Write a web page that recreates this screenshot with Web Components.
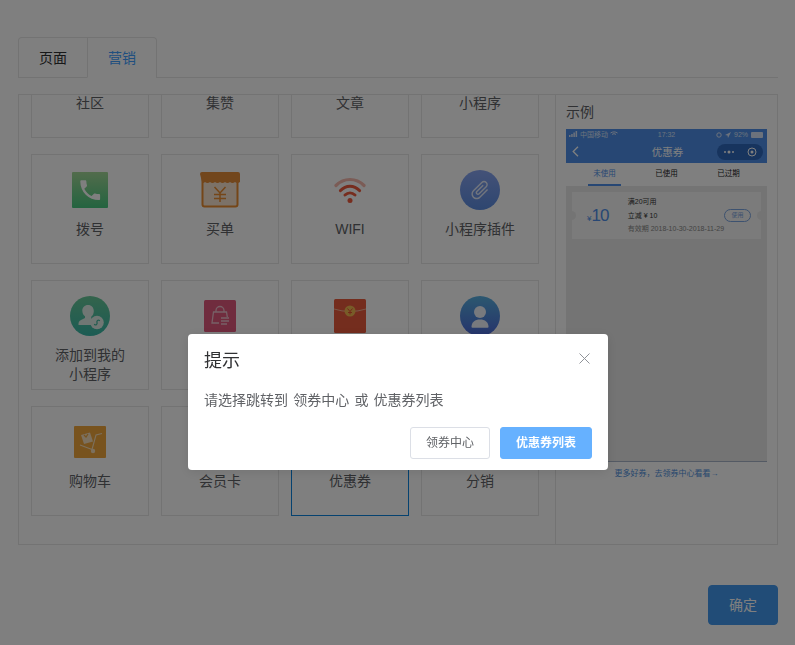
<!DOCTYPE html>
<html lang="zh">
<head>
<meta charset="utf-8">
<title>营销</title>
<style>
  html, body { margin: 0; height: 100%; background: #fff; overflow: hidden; }
  body { font-family: "Liberation Sans", "Noto Sans CJK SC", sans-serif; color: #303133; }
</style>
</head>
<body>
<picker-page>
  <tab-bar>
    <tab-item>页面</tab-item>
    <tab-item active>营销</tab-item>
  </tab-bar>
  <picker-panel>
    <feature-grid>
      <feature-card label="社区"></feature-card>
      <feature-card label="集赞"></feature-card>
      <feature-card label="文章"></feature-card>
      <feature-card label="小程序"></feature-card>

      <feature-card label="拨号">
        <svg slot="icon" width="36" height="36" viewBox="0 0 36 36">
          <defs><linearGradient id="g-dial" x1="0" y1="0" x2="0" y2="1"><stop offset="0" stop-color="#a4d898"/><stop offset="1" stop-color="#48c880"/></linearGradient></defs>
          <rect width="36" height="36" rx="1" fill="url(#g-dial)"/>
          <path transform="translate(5 5) scale(1.1)" fill="#fff" d="M6.62 10.79c1.44 2.83 3.76 5.14 6.59 6.59l2.2-2.2c.27-.27.67-.36 1.02-.24 1.12.37 2.33.57 3.57.57.55 0 1 .45 1 1V20c0 .55-.45 1-1 1-9.39 0-17-7.61-17-17 0-.55.45-1 1-1h3.5c.55 0 1 .45 1 1 0 1.25.2 2.45.57 3.57.11.35.03.74-.25 1.02l-2.2 2.2z"/>
        </svg>
      </feature-card>
      <feature-card label="买单">
        <svg slot="icon" width="40" height="36" viewBox="0 0 40 36">
          <rect x="2.500" y="4" width="35" height="30.500" rx="2" fill="#f8e4d0" stroke="#ea8c30" stroke-width="2"/>
          <path d="M0 2q0-2 2-2h36q2 0 2 2v8q-2.500 2-5 0q-2.500 2-5 0q-2.500 2-5 0q-2.500 2-5 0q-2.500 2-5 0q-2.500 2-5 0q-2.500 2-5 0q-2.500 2-3 0z" fill="#e48c38"/>
          <path d="M14.500 15l5.500 6 5.500-6M20 21v9M14 22.500h12M14 26.500h12" fill="none" stroke="#ea8c30" stroke-width="1.500"/>
        </svg>
      </feature-card>
      <feature-card label="WIFI">
        <svg slot="icon" width="32" height="28" viewBox="0 0 32 28">
          <path d="M2 9.500C10 1.500 22 1.500 30 9.500" fill="none" stroke="#f6b8ac" stroke-width="3.200" stroke-linecap="round"/>
          <path d="M6.500 14.500C12 8.800 20 8.800 25.500 14.500" fill="none" stroke="#ee5a3c" stroke-width="3.200" stroke-linecap="round"/>
          <path d="M11 19c3-2.800 7-2.800 10 0" fill="none" stroke="#ee5a3c" stroke-width="3" stroke-linecap="round"/>
          <circle cx="16" cy="24.500" r="2.500" fill="#ee5a3c"/>
        </svg>
      </feature-card>
      <feature-card label="小程序插件">
        <svg slot="icon" width="40" height="40" viewBox="0 0 40 40">
          <defs><linearGradient id="g-clip" x1="0" y1="0" x2="0" y2="1"><stop offset="0" stop-color="#88a4f0"/><stop offset="1" stop-color="#5c8ce0"/></linearGradient></defs>
          <circle cx="20" cy="20" r="20" fill="url(#g-clip)"/>
          <path transform="translate(20 20) rotate(45) scale(.95) translate(-12 -12)" fill="#fff" fill-opacity=".8" d="M16.500 6v11.500c0 2.210-1.790 4-4 4s-4-1.790-4-4V5c0-1.380 1.120-2.500 2.500-2.500s2.500 1.120 2.500 2.500v10.500c0 .550-.450 1-1 1s-1-.450-1-1V6H10v9.500c0 1.380 1.120 2.500 2.500 2.500s2.500-1.120 2.500-2.500V5c0-2.210-1.790-4-4-4S7 2.790 7 5v12.500c0 3.040 2.460 5.500 5.500 5.500s5.500-2.460 5.500-5.500V6h-1.500z"/>
        </svg>
      </feature-card>

      <feature-card label="添加到我的小程序" wrap>
        <svg slot="icon" width="40" height="40" viewBox="0 0 40 40">
          <defs><linearGradient id="g-mine" x1="0" y1="0" x2="0" y2="1"><stop offset="0" stop-color="#68c898"/><stop offset="1" stop-color="#38b8a8"/></linearGradient></defs>
          <circle cx="20" cy="20" r="20" fill="url(#g-mine)"/>
          <path d="M18 9c3.500 0 5.800 2.600 5.800 6 0 2.500-1 4.600-2.600 5.800v1.700l3 1.400c-1.600 1.200-2.600 3-2.600 5.100H8.500v-1.500c0-2 1.500-3.300 3.500-4l3-1.500v-1.700c-1.700-1.200-2.700-3.300-2.700-5.800C12.300 11.600 14.500 9 18 9z" fill="#e0efe8"/>
          <circle cx="27" cy="26.500" r="6.800" fill="#e0efe8"/>
          <path d="M24.500 28.500c1.500 1 3-.3 2.500-2s1-3 2.500-2" fill="none" stroke="#48b8a0" stroke-width="1.300" stroke-linecap="round"/>
        </svg>
      </feature-card>
      <feature-card>
        <svg slot="icon" width="32" height="32" viewBox="0 0 32 32">
          <rect width="32" height="32" rx="1.500" fill="#e0587c"/>
          <path d="M10 23h-2l1.500-11h13l.8 5M12 12v-1.500a4 4 0 0 1 8 0V12M10 23h5" fill="none" stroke="#eec0cc" stroke-width="1.300"/>
          <path d="M17 18h8M17 21h8M17 24h6" stroke="#eec0cc" stroke-width="1.300"/>
        </svg>
      </feature-card>
      <feature-card>
        <svg slot="icon" width="32" height="34" viewBox="0 0 32 34">
          <rect width="32" height="34" rx="1.500" fill="#e85a3c"/>
          <path d="M0 10q16 5 32 0" fill="none" stroke="#f8c8a8" stroke-width=".8"/>
          <circle cx="16" cy="12" r="5.500" fill="#f0b850"/>
          <path d="M13.500 9.500l2.500 3 2.500-3M16 12.500v3M14 13.500h4" fill="none" stroke="#e85030" stroke-width="1"/>
        </svg>
      </feature-card>
      <feature-card>
        <svg slot="icon" width="40" height="40" viewBox="0 0 40 40">
          <defs><linearGradient id="g-user" x1="0" y1="0" x2="0" y2="1"><stop offset="0" stop-color="#58b0e0"/><stop offset="1" stop-color="#4c68d8"/></linearGradient></defs>
          <circle cx="20" cy="20" r="20" fill="url(#g-user)"/>
          <circle cx="20" cy="16" r="6" fill="#f0f4fc"/>
          <path d="M11.500 31c0-5 3.500-7.500 8.500-7.500s8.500 2.500 8.500 7.500q0 .8-1 .8h-15q-1 0-1-.8z" fill="#f0f4fc"/>
        </svg>
      </feature-card>

      <feature-card label="购物车">
        <svg slot="icon" width="32" height="32" viewBox="0 0 32 32">
          <rect width="32" height="32" rx="1" fill="#f0a63c"/>
          <path d="M7 9l9-2.500 3 9-9 2.500z" fill="#f8e0bc"/>
          <path d="M10 9l2 2 2-3" fill="none" stroke="#f0a63c" stroke-width="1.200"/>
          <path d="M6 19l12 4.500M18 23.500L22 9l6-1.500" fill="none" stroke="#f8e0bc" stroke-width="1.100"/>
          <circle cx="19" cy="25" r="2.200" fill="#f8e0bc"/>
        </svg>
      </feature-card>
      <feature-card label="会员卡"></feature-card>
      <feature-card label="优惠券" active></feature-card>
      <feature-card label="分销"></feature-card>
    </feature-grid>
    <example-phone slot="aside"></example-phone>
  </picker-panel>
  <base-button slot="footer" kind="primary" size="large">确定</base-button>
</picker-page>

<message-box title="提示">
  请选择跳转到 领券中心 或 优惠券列表
  <base-button slot="actions">领券中心</base-button>
  <base-button slot="actions" kind="light">优惠券列表</base-button>
</message-box>

<script>
const FONT = '"Liberation Sans", "Noto Sans CJK SC", sans-serif';

class PickerPage extends HTMLElement {
  constructor() {
    super();
    this.attachShadow({ mode: "open" }).innerHTML = `
      <style>
        :host { display:flex; flex-direction:column; padding:37px 17px 0 18px; font-family:${FONT}; }
        .footer { display:flex; justify-content:flex-end; margin-top:40px; }
      </style>
      <slot></slot>
      <div class="footer"><slot name="footer"></slot></div>`;
  }
}

class TabBar extends HTMLElement {
  constructor() {
    super();
    this.attachShadow({ mode: "open" }).innerHTML = `
      <style>
        :host { display:block; border-bottom:1px solid #e6e6e6; height:40px; margin-bottom:16px; }
        .nav { display:inline-flex; border:1px solid #e6e6e6; border-bottom:none; border-radius:4px 4px 0 0; }
      </style>
      <div class="nav"><slot></slot></div>`;
  }
}

class TabItem extends HTMLElement {
  constructor() {
    super();
    this.attachShadow({ mode: "open" }).innerHTML = `
      <style>
        :host { display:block; box-sizing:border-box; height:40px; padding:0 20px; line-height:40px; font-size:14px; color:#303133; border-bottom:1px solid #e6e6e6; }
        :host(:not(:first-child)) { border-left:1px solid #e6e6e6; }
        :host([active]) { color:#409eff; border-bottom-color:#fff; }
      </style>
      <slot></slot>`;
  }
}

class PickerPanel extends HTMLElement {
  constructor() {
    super();
    this.attachShadow({ mode: "open" }).innerHTML = `
      <style>
        :host { display:flex; box-sizing:border-box; height:451px; border:1px solid #e6e6e6; }
        .list { width:536px; overflow:hidden; border-right:1px solid #e6e6e6; }
        .aside { flex:1; padding:0 10px; min-width:0; }
      </style>
      <div class="list"><slot></slot></div>
      <div class="aside"><slot name="aside"></slot></div>`;
  }
}

class FeatureGrid extends HTMLElement {
  constructor() {
    super();
    // first row is scrolled mostly out of view
    this.attachShadow({ mode: "open" }).innerHTML = `
      <style>
        :host { display:grid; grid-template-columns:repeat(4,118px); grid-auto-rows:110px; column-gap:12px; row-gap:16px; padding-left:12px; margin-top:-67px; }
      </style>
      <slot></slot>`;
  }
}

class FeatureCard extends HTMLElement {
  constructor() {
    super();
    this.attachShadow({ mode: "open" }).innerHTML = `
      <style>
        :host { display:flex; flex-direction:column; align-items:center; box-sizing:border-box; padding-top:15px; border:1px solid #e6e6e6; font-size:14px; color:#606266; }
        :host([active]) { border-color:#0a84e0; }
        .icon { display:flex; align-items:center; justify-content:center; width:40px; height:40px; margin-bottom:10px; }
        .label { line-height:19px; text-align:center; width:98px; }
      </style>
      <div class="icon"><slot name="icon"></slot></div>
      <div class="label"></div>`;
  }

  connectedCallback() {
    const label = this.getAttribute("label") || "";
    const el = this.shadowRoot.querySelector(".label");
    // wrapped labels break after the fifth character
    if (this.hasAttribute("wrap")) {
      el.innerHTML = `${label.slice(0, 5)}<br>${label.slice(5)}`;
    } else {
      el.textContent = label;
    }
  }
}

class ExamplePhone extends HTMLElement {
  constructor() {
    super();
    this.attachShadow({ mode: "open" }).innerHTML = `
      <style>
        :host { display:block; font-size:14px; color:#606266; }
        .title { line-height:20px; padding-top:7px; margin-bottom:7px; }
        .shot { display:flex; flex-direction:column; height:332px; border-bottom:1px solid #a8b4c8; background:#e8e8e8; }
        .head { background:#4f8fe8; color:#fff; height:34px; display:flex; flex-direction:column; }
        .status { display:grid; grid-template-columns:1fr auto 1fr; align-items:center; height:11px; padding:0 3px; font-size:7px; line-height:11px; color:#d8e4f8; }
        .status .r { display:flex; align-items:center; justify-content:flex-end; gap:3px; }
        .nav { flex:1; display:grid; grid-template-columns:1fr auto 1fr; align-items:center; padding:0 4px 0 6px; font-size:10.500px; }
        .capsule { justify-self:end; display:flex; align-items:center; justify-content:space-around; width:46px; height:16px; border-radius:8px; background:#2f68bc; }
        .tabs { display:flex; justify-content:center; height:23px; background:#fff; font-size:7.500px; line-height:21px; text-align:center; color:#222; }
        .tabs span { box-sizing:border-box; flex:0 0 62px; height:23px; }
        .tabs .on { flex:0 0 33px; margin:0 14.500px; color:#4f8fe8; border-bottom:2px solid #4f8fe8; }
        .ticket { position:relative; display:flex; align-items:center; margin:6px 6px 0; height:47px; background:#f6f6f6; }
        .ticket::before, .ticket::after { content:""; position:absolute; top:19px; width:9px; height:9px; border-radius:50%; background:#e8e8e8; }
        .ticket::before { left:-5px; }
        .ticket::after { right:-5px; }
        .price { width:56px; padding-left:15px; box-sizing:border-box; color:#4f8fe8; font-size:8px; white-space:nowrap; }
        .price b { font-weight:500; font-size:17px; letter-spacing:-1px; }
        .info { flex:1; font-size:7px; line-height:13.500px; color:#333; white-space:nowrap; }
        .info .date { color:#888; }
        .use { width:25px; height:11px; margin-right:10px; border:1px solid #7aa4e0; border-radius:7px; color:#7aa4e0; font-size:6px; line-height:11px; text-align:center; }
        .more { text-align:center; font-size:8px; line-height:12px; margin-top:6px; color:#4f8fdc; }
      </style>
      <div class="title">示例</div>
      <div class="shot">
        <div class="head">
          <div class="status">
            <span>
              <svg width="9" height="6" viewBox="0 0 9 6"><path fill="#d8e4f8" d="M0 4h1.500v2H0zM2.200 3h1.500v3H2.200zM4.400 1.500h1.500V6H4.400zM6.600 0h1.500v6H6.600z"/></svg>
              中国移动
              <svg width="8" height="6" viewBox="0 0 8 6"><path fill="none" stroke="#d8e4f8" d="M.5 2c2-1.500 5-1.500 7 0M2 3.500c1.200-1 2.800-1 4 0"/></svg>
            </span>
            <span>17:32</span>
            <span class="r">
              <svg width="6" height="6" viewBox="0 0 6 6"><circle cx="3" cy="3" r="2.200" fill="none" stroke="#d8e4f8"/></svg>
              <svg width="6" height="6" viewBox="0 0 6 6"><path fill="#d8e4f8" d="M6 0L0 3l2.500.6L3 6z"/></svg>
              <span>92%</span>
              <svg width="13" height="6" viewBox="0 0 13 6"><rect width="12" height="6" rx="1" fill="#d8e4f8"/></svg>
            </span>
          </div>
          <div class="nav">
            <svg width="7" height="11" viewBox="0 0 7 11"><path d="M6 .8L1.200 5.500 6 10.200" fill="none" stroke="#fff" stroke-width="1.300"/></svg>
            <span>优惠券</span>
            <div class="capsule">
              <svg width="12" height="4" viewBox="0 0 12 4"><circle cx="2" cy="2" r="1" fill="#fff"/><circle cx="6" cy="2" r="1.500" fill="#fff"/><circle cx="10" cy="2" r="1" fill="#fff"/></svg>
              <svg width="10" height="10" viewBox="0 0 10 10"><circle cx="5" cy="5" r="4" fill="none" stroke="#fff"/><circle cx="5" cy="5" r="1.500" fill="#fff"/></svg>
            </div>
          </div>
        </div>
        <div class="tabs"><span class="on">未使用</span><span>已使用</span><span>已过期</span></div>
        <div class="ticket">
          <div class="price">¥<b>10</b></div>
          <div class="info">满20可用<br>立减 ¥ 10<br><span class="date">有效期 2018-10-30-2018-11-29</span></div>
          <div class="use">使用</div>
        </div>
      </div>
      <div class="more">更多好券，去领券中心看看→</div>`;
  }
}

class BaseButton extends HTMLElement {
  constructor() {
    super();
    this.attachShadow({ mode: "open" }).innerHTML = `
      <style>
        :host { display:inline-block; box-sizing:border-box; height:32px; padding:0 15px; line-height:30px; font-size:12px; color:#606266; background:#fff; border:1px solid #dcdfe6; border-radius:3px; text-align:center; }
        :host([kind="light"]) { background:#66b1ff; border-color:#66b1ff; color:#fff; font-weight:700; }
        :host([kind="primary"]) { background:#4298ee; border-color:#4298ee; color:#fff; }
        :host([size="large"]) { width:70px; height:40px; line-height:38px; font-size:14px; border-radius:4px; }
      </style>
      <slot></slot>`;
  }
}

class MessageBox extends HTMLElement {
  constructor() {
    super();
    this.attachShadow({ mode: "open" }).innerHTML = `
      <style>
        :host { position:fixed; inset:0; display:flex; justify-content:center; align-items:flex-start; padding:334px 0 0 1px; box-sizing:border-box; background:rgba(0,0,0,.5); font-family:${FONT}; }
        .box { display:flex; flex-direction:column; width:420px; height:136px; box-sizing:border-box; padding:15px 16px 11px; background:#fff; border-radius:4px; box-shadow:0 2px 12px rgba(0,0,0,.1); }
        .head { display:flex; justify-content:space-between; align-items:flex-start; height:24px; }
        .title { font-size:18px; line-height:24px; color:#303133; }
        .close { margin:4px 2px 0 0; }
        .msg { margin-top:15px; font-size:14px; line-height:24px; color:#606266; word-spacing:1.300px; }
        .actions { display:flex; justify-content:flex-end; gap:10px; margin-top:15px; }
      </style>
      <div class="box">
        <div class="head">
          <div class="title"></div>
          <svg class="close" width="11" height="11" viewBox="0 0 11 11"><path d="M.5.500l10 10M10.500.500l-10 10" stroke="#909399"/></svg>
        </div>
        <div class="msg"><slot></slot></div>
        <div class="actions"><slot name="actions"></slot></div>
      </div>`;
  }

  connectedCallback() {
    this.shadowRoot.querySelector(".title").textContent = this.getAttribute("title") || "";
  }
}

customElements.define("picker-page", PickerPage);
customElements.define("tab-bar", TabBar);
customElements.define("tab-item", TabItem);
customElements.define("picker-panel", PickerPanel);
customElements.define("feature-grid", FeatureGrid);
customElements.define("feature-card", FeatureCard);
customElements.define("example-phone", ExamplePhone);
customElements.define("base-button", BaseButton);
customElements.define("message-box", MessageBox);
</script>
</body>
</html>
